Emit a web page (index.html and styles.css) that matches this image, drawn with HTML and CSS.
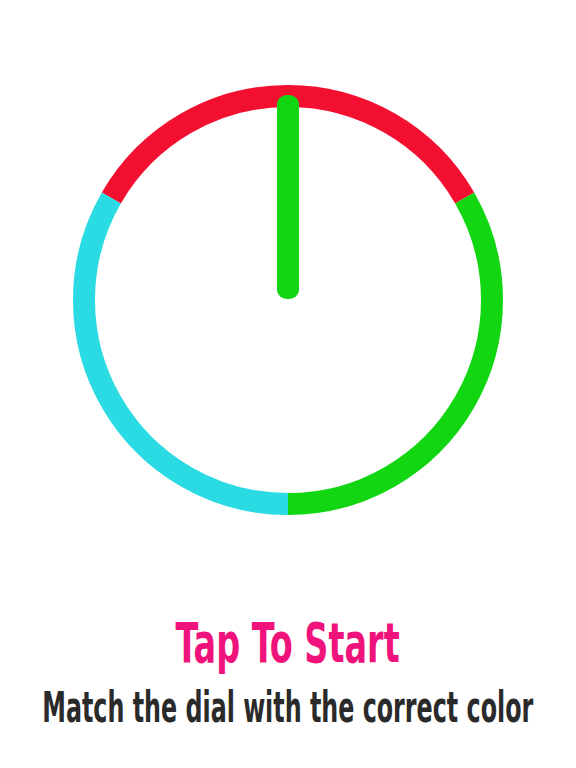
FILE: index.html
```html
<!DOCTYPE html>
<html lang="en">
<head>
  <meta charset="UTF-8">
  <title>Color Dial</title>
  <meta name="viewport" content="width=device-width, initial-scale=1">
  <link rel="stylesheet" href="styles.css">
</head>
<body>

  <div class="game">
    <svg class="dial" width="440" height="440" viewBox="0 0 440 440">
      <!-- three 120deg sections of the ring -->
      <path class="ring red" d="M 43.33 118 A 204 204 0 0 1 396.67 118" />
      <path class="ring green" d="M 396.67 118 A 204 204 0 0 1 220 424" />
      <path class="ring cyan" d="M 220 424 A 204 204 0 0 1 43.33 118" />
      <!-- the hand -->
      <rect class="hand" x="209" y="15" width="22" height="204" rx="10" ry="9" />
    </svg>

    <div class="caption">
      <h1><span>Tap To Start</span></h1>
      <p><span>Match the dial with the correct color</span></p>
    </div>
  </div>

</body>
</html>
```

FILE: styles.css
```css
* {
  box-sizing: border-box;
}

body {
  margin: 0;
  background: #fff;
  font-family: 'DejaVu Sans Condensed', 'DejaVu Sans', sans-serif;
}

.game {
  width: 576px;
  height: 768px;
  display: flex;
  flex-direction: column;
  align-items: center;
  padding-top: 80px;
  overflow: hidden;
}

.dial {
  display: block;
}

.ring {
  fill: none;
  stroke-width: 22;
}

.red { stroke: #f20f30; }
.green { stroke: #12d612; }
.cyan { stroke: #2adbe3; }

.hand {
  fill: #12d612;
}

.caption {
  margin-top: 92px;
  width: 100%;
}

.caption h1,
.caption p {
  display: flex;
  justify-content: center;
  white-space: nowrap;
}

.caption span {
  flex: none;
  transform: scaleX(0.665);
}

h1 {
  margin: 0;
  font-size: 56px;
  line-height: 62px;
  font-weight: bold;
  color: #f0137b;
}

p {
  margin: 7px 0 0;
  font-size: 42px;
  line-height: 54px;
  font-weight: bold;
  color: #2a2a2a;
}

.caption p span {
  transform: scaleX(0.63);
}
```
